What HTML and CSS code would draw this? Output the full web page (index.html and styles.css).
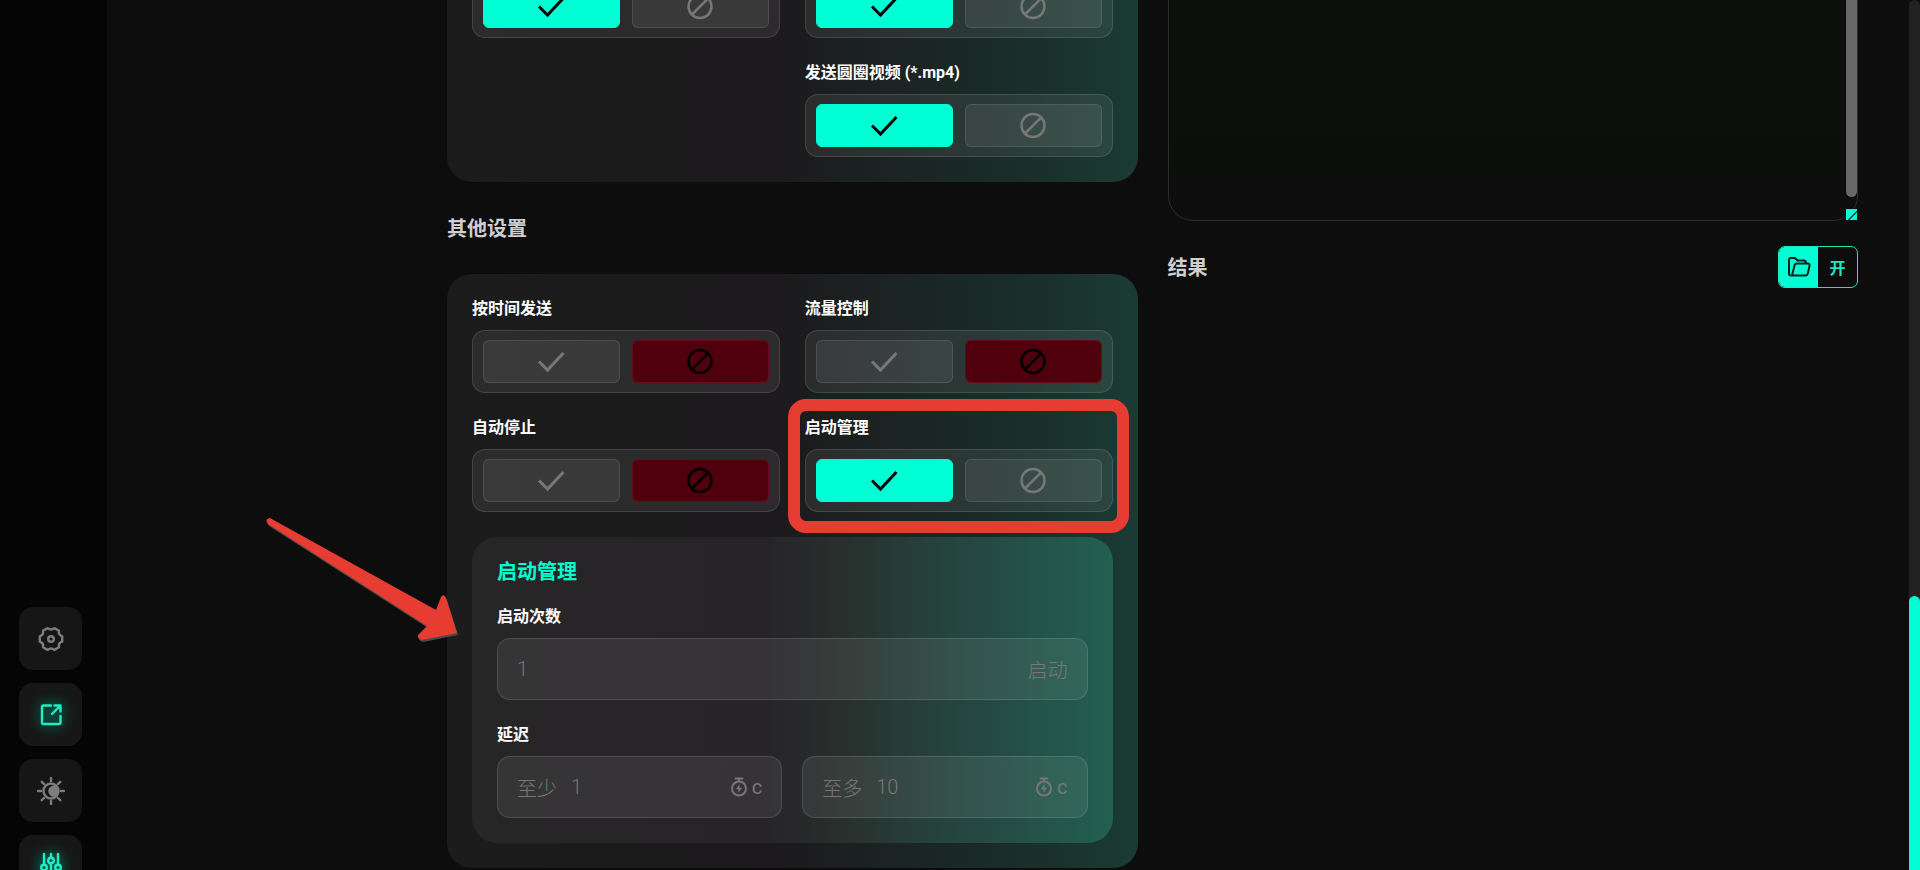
FILE: index.html
```html
<!DOCTYPE html>
<html lang="zh-CN">
<head>
  <meta charset="UTF-8" />
  <meta name="viewport" content="width=device-width, initial-scale=1" />
  <title>设置</title>
  <link rel="stylesheet" href="styles.css">
</head>
<body>
  <!-- shared icons -->
  <svg class="sprite" width="0" height="0">
    <symbol id="check" viewBox="0 0 28 28"><path d="M2 13.500 10.500 22 26.500 5" /></symbol>
    <symbol id="ban" viewBox="0 0 28 28"><circle cx="14" cy="13.500" r="11.500" stroke-width="2.500" /><path d="M6 21.500 22 5.500" stroke-width="2.500" /></symbol>
    <symbol id="timer" viewBox="0 0 18 20"><circle cx="9" cy="11.500" r="7" /><path d="M5.500 1.500h7M9 2v2.500" /><path class="solid" d="M9.500 7 6 12.300h2.500L8.200 16l3.800-5.300H9.500z" /></symbol>
  </svg>

  <div class="app">
    <nav class="sidebar">
      <button class="side-btn" aria-label="设置">
        <svg width="26" height="26" viewBox="0 0 26 26"><path d="M24.200 10.300V15.700Q20 17 21 21.200L16.300 23.900Q13 21 9.700 23.900L5 21.200Q5.900 17.100 1.800 15.700V10.300Q5.900 8.900 5 4.800L9.700 2.100Q13 5 16.300 2.100L21 4.800Q20.100 8.900 24.200 10.300z" /><circle cx="13" cy="13" r="2.800" /></svg>
      </button>
      <button class="side-btn active" aria-label="打开">
        <svg width="26" height="26" viewBox="0 0 26 26"><path d="M13 3.500H5.500Q4 3.500 4 5V20.500Q4 22 5.500 22H21Q22.500 22 22.500 20.500V14M14 12 22 4M16.500 3.500h6v6" /></svg>
      </button>
      <button class="side-btn" aria-label="主题">
        <svg width="28" height="28" viewBox="0 0 28 28"><circle cx="14" cy="14" r="7.500" /><path d="M14 1v3M14 24v3M1 14h3M24 14h3M4.800 4.800 7 7M21 21l2.200 2.200M4.800 23.200 7 21M21 7l2.200-2.200" /><path class="solid" d="M17 8.500A6 6 0 0 1 17 20 5 5 0 0 1 17 8.500z" /></svg>
      </button>
      <button class="side-btn active" aria-label="参数">
        <svg width="30" height="30" viewBox="0 0 30 30"><path d="M8 2v10M8 18.500V28M15 2v3.500M15 11.500V28M22 2v10M22 18.500V28" /><circle cx="8" cy="15.500" r="2.800" /><circle cx="15" cy="8.500" r="2.800" /><circle cx="22" cy="15.500" r="2.800" /></svg>
      </button>
    </nav>

    <main class="content">
      <section class="column">
        <div class="card card-top">
          <div class="grid">
            <div class="toggle" role="group">
              <button class="on" aria-label="启用"><svg class="icon"><use href="#check" /></svg></button>
              <button aria-label="禁用"><svg class="icon"><use href="#ban" /></svg></button>
            </div>
            <div class="toggle" role="group">
              <button class="on" aria-label="启用"><svg class="icon"><use href="#check" /></svg></button>
              <button aria-label="禁用"><svg class="icon"><use href="#ban" /></svg></button>
            </div>
            <div class="field second">
              <span class="label" id="l-circle">发送圆圈视频 (*.mp4)</span>
              <div class="toggle" role="group" aria-labelledby="l-circle">
                <button class="on" aria-label="启用"><svg class="icon"><use href="#check" /></svg></button>
                <button aria-label="禁用"><svg class="icon"><use href="#ban" /></svg></button>
              </div>
            </div>
          </div>
        </div>

        <h2 class="heading">其他设置</h2>

        <div class="card">
          <div class="grid">
            <div class="field">
              <span class="label" id="l-time">按时间发送</span>
              <div class="toggle" role="group" aria-labelledby="l-time">
                <button aria-label="启用"><svg class="icon"><use href="#check" /></svg></button>
                <button class="off" aria-label="禁用"><svg class="icon"><use href="#ban" /></svg></button>
              </div>
            </div>
            <div class="field">
              <span class="label" id="l-flow">流量控制</span>
              <div class="toggle" role="group" aria-labelledby="l-flow">
                <button aria-label="启用"><svg class="icon"><use href="#check" /></svg></button>
                <button class="off" aria-label="禁用"><svg class="icon"><use href="#ban" /></svg></button>
              </div>
            </div>
            <div class="field">
              <span class="label" id="l-stop">自动停止</span>
              <div class="toggle" role="group" aria-labelledby="l-stop">
                <button aria-label="启用"><svg class="icon"><use href="#check" /></svg></button>
                <button class="off" aria-label="禁用"><svg class="icon"><use href="#ban" /></svg></button>
              </div>
            </div>
            <div class="field marked">
              <span class="label" id="l-start">启动管理</span>
              <div class="toggle" role="group" aria-labelledby="l-start">
                <button class="on" aria-label="启用"><svg class="icon"><use href="#check" /></svg></button>
                <button aria-label="禁用"><svg class="icon"><use href="#ban" /></svg></button>
              </div>
            </div>
          </div>

          <div class="panel">
            <h3>启动管理</h3>
            <div class="field">
              <label class="label" for="starts">启动次数</label>
              <div class="input">
                <input id="starts" type="text" placeholder="1">
                <span>启动</span>
              </div>
            </div>
            <div class="field">
              <label class="label" for="delayMin">延迟</label>
              <div class="pair">
                <div class="input">
                  <span>至少</span>
                  <input id="delayMin" type="text" placeholder="1">
                  <span class="unit"><svg width="18" height="20"><use href="#timer" /></svg>c</span>
                </div>
                <div class="input">
                  <span>至多</span>
                  <input id="delayMax" type="text" placeholder="10" aria-label="至多">
                  <span class="unit"><svg width="18" height="20"><use href="#timer" /></svg>c</span>
                </div>
              </div>
            </div>
          </div>

          <svg class="arrow" width="200" height="136" viewBox="0 0 200 136">
            <path class="shade" d="M6 3 172 95 177 82Q180 78 182 83L193 118 158 125Q153 124 154 120L163 111 4 9Q0 4 6 3z" transform="translate(1 2)" />
            <path d="M6 3 172 95 177 82Q180 78 182 83L193 118 158 125Q153 124 154 120L163 111 4 9Q0 4 6 3z" />
          </svg>
        </div>
      </section>

      <section class="column">
        <div class="log">
          <textarea aria-label="日志"></textarea>
          <i class="log-thumb"></i>
          <i class="log-grip"></i>
        </div>
        <div class="result">
          <h2 class="heading">结果</h2>
          <button class="open-btn">
            <span class="open-icon"><svg width="24" height="22" viewBox="0 0 24 22"><path d="M5 19.500H4Q2 19.500 2 17.500V4Q2 2 4 2h4l2.500 2.500H17Q19 4.500 19 7.500M5 19.500 7.500 9.500Q8 7.500 10 7.500H20.500Q23 7.500 22.500 10L20.800 17.500Q20.300 19.500 18.500 19.500z" /></svg></span>
            <span class="open-text">开</span>
          </button>
        </div>
      </section>
    </main>

    <div class="scrollbar"><i></i></div>
  </div>
</body>
</html>
```

FILE: styles.css
```css
* {
  box-sizing: border-box;
}

body {
  margin: 0;
  background: #0d0d0d;
  color: #fff;
  font-family: "Roboto", "Noto Sans CJK SC", sans-serif;
  overflow: hidden;
}

button {
  padding: 0;
  border: none;
  font-family: inherit;
  cursor: pointer;
}

svg {
  fill: none;
  stroke: currentColor;
  stroke-width: 2;
  stroke-linecap: round;
  stroke-linejoin: round;
}

.solid {
  fill: currentColor;
  stroke: none;
}

.sprite {
  position: absolute;
}

.app {
  display: flex;
  height: 100vh;
  overflow: hidden;
}

/* sidebar */
.sidebar {
  display: flex;
  flex-direction: column;
  justify-content: flex-end;
  align-items: center;
  gap: 13px;
  flex: 0 0 107px;
  margin-bottom: -28px;
  padding-right: 6px;
  background: #050505;
}

.side-btn {
  display: flex;
  align-items: center;
  justify-content: center;
  flex: 0 0 63px;
  width: 63px;
  border-radius: 14px;
  background: #161616;
  color: #7d7d7d;
}

.side-btn svg {
  stroke-width: 2.4;
}

.side-btn.active {
  background: radial-gradient(circle, #0c2c26 0%, #161a19 45%, #171717 65%);
  color: #1fedc2;
}

.side-btn.active svg {
  filter: drop-shadow(0 0 6px rgba(0, 255, 210, 0.5));
}

/* content */
.content {
  display: flex;
  align-items: flex-start;
  gap: 30px;
  flex: 1;
  margin-top: -25px;
  padding: 0 51px 0 340px;
}

.column {
  flex: 1 1 0;
  min-width: 0;
}

.card {
  position: relative;
  padding: 25px;
  border-radius: 25px;
  background: linear-gradient(90deg, #1c1c1c 0%, #1c1a1c 48%, #1b2423 65%, #1a2c28 80%, #1a3b33 100%);
}

.card-top {
  padding-top: 0;
  border-radius: 0 0 25px 25px;
}

.grid {
  display: grid;
  grid-template-columns: 1fr 1fr;
  gap: 25px;
}

.field {
  display: flex;
  flex-direction: column;
  gap: 13px;
}

.second {
  grid-column: 2;
}

.label {
  padding-top: 2px;
  font-size: 16px;
  font-weight: 700;
  line-height: 16px;
}

.heading {
  margin: 0;
  padding: 35px 0 33px;
  font-size: 20px;
  font-weight: 700;
  line-height: 24px;
  color: #cfcfcf;
}

.toggle {
  display: flex;
  gap: 12px;
  height: 63px;
  padding: 9px 10px;
  border: 1px solid rgba(255, 255, 255, 0.12);
  border-radius: 13px;
  background: rgba(255, 255, 255, 0.07);
}

.toggle button {
  display: flex;
  align-items: center;
  justify-content: center;
  flex: 1;
  border: 1px solid rgba(255, 255, 255, 0.1);
  border-radius: 6px;
  background: rgba(255, 255, 255, 0.07);
  color: #777;
}

.toggle .on {
  border-color: #00ffd5;
  background: #00ffd5;
  color: #000;
}

.toggle .off {
  border-color: #6b0a1c;
  background: #50000d;
  color: #000;
}

.icon {
  width: 28px;
  height: 28px;
  stroke-width: 3;
  stroke-linecap: butt;
  stroke-linejoin: miter;
}

/* highlight frame round a field */
.marked {
  position: relative;
}

.marked::after {
  content: "";
  position: absolute;
  inset: -19px -16px -21px -17px;
  border: 12px solid #e63c32;
  border-radius: 18px;
}

.panel {
  display: flex;
  flex-direction: column;
  gap: 25px;
  margin-top: 25px;
  padding: 25px;
  border-radius: 25px;
  background: linear-gradient(90deg, #272627 0%, #272427 46%, #28322e 60%, #263f3b 70%, #244e45 84%, #226050 100%);
}

.panel h3 {
  margin: 0;
  font-size: 20px;
  line-height: 20px;
  color: #00ffd0;
}

.pair {
  display: grid;
  grid-template-columns: repeat(2, minmax(0, 1fr));
  gap: 20px;
}

.input {
  display: flex;
  align-items: center;
  gap: 14px;
  height: 62px;
  padding: 0 19px;
  border: 1px solid rgba(255, 255, 255, 0.12);
  border-radius: 13px;
  background: rgba(255, 255, 255, 0.07);
  color: #777;
  font-size: 20px;
  font-weight: 300;
}

.input span {
  flex: none;
}

.input input {
  flex: 1;
  width: 100%;
  min-width: 0;
  padding: 0;
  border: none;
  outline: none;
  background: none;
  color: inherit;
  font: inherit;
}

.input input::placeholder {
  color: #777;
}

.input .unit {
  display: flex;
  align-items: center;
  gap: 4px;
  font-weight: 400;
}

.arrow {
  position: absolute;
  top: 241px;
  left: -183px;
  fill: #e63c32;
  stroke: none;
}

.arrow .shade {
  fill: #4a4a4a;
}

/* right column */
.log {
  position: relative;
  height: 246px;
}

.log textarea {
  display: block;
  width: 100%;
  height: 100%;
  border: 1px solid #2c2c2c;
  border-radius: 25px;
  background: linear-gradient(#0c0f0b, #0c0f0c 60%, #0d0d0d);
  resize: none;
}

.log-thumb {
  position: absolute;
  top: 0;
  right: 1px;
  width: 11px;
  height: 222px;
  border-radius: 6px;
  background: #686868;
}

.log-grip {
  position: absolute;
  right: 1px;
  bottom: 1px;
  width: 11px;
  height: 11px;
  background: linear-gradient(135deg, #00ffd5 55%, #07443b 55%, #07443b 65%, #00ffd5 65%);
}

.result {
  display: flex;
  align-items: center;
  justify-content: space-between;
}

.open-btn {
  display: flex;
  width: 80px;
  height: 42px;
  border: 1px solid #1fe6c0;
  border-radius: 7px;
  background: none;
  color: #1fe6c0;
  overflow: hidden;
}

.open-icon,
.open-text {
  display: flex;
  align-items: center;
  justify-content: center;
  flex: 1;
  height: 100%;
  font-size: 16px;
  font-weight: 700;
}

.open-icon {
  background: #00ffd5;
  color: #04211c;
}

/* page scrollbar */
.scrollbar {
  display: flex;
  align-items: flex-end;
  flex: 0 0 11px;
  border-radius: 6px 6px 0 0;
  background: #212121;
}

.scrollbar i {
  width: 100%;
  height: 31.5%;
  border-radius: 6px 6px 0 0;
  background: #00ffd5;
}
```
